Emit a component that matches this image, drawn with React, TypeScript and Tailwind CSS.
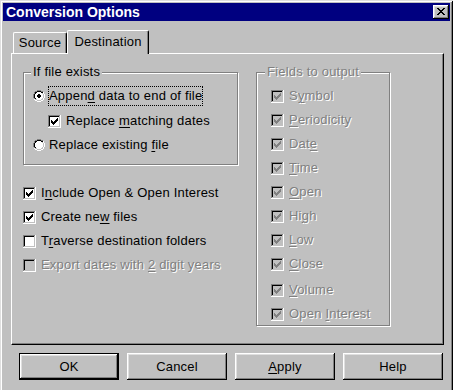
import React from 'react';
import clsx from 'clsx';

const COLORS: Record<string, string> = {
  g: '#808080',
  k: '#000000',
  w: '#ffffff',
  l: '#dfdfdf',
  f: '#ffffff',
  c: '#c0c0c0',
};

function PixelArt({ rows, colors = COLORS, className }: { rows: string[]; colors?: Record<string, string>; className?: string }) {
  const w = rows[0].length;
  const h = rows.length;
  return (
    <svg width={w} height={h} viewBox={`0 0 ${w} ${h}`} shapeRendering="crispEdges" className={clsx('shrink-0 block', className)}>
      {rows.flatMap((row, y) =>
        row.split('').map((ch, x) =>
          ch === '.' ? null : <rect key={`${x}-${y}`} x={x} y={y} width={1} height={1} fill={colors[ch]} />
        )
      )}
    </svg>
  );
}

const CLOSE_X = [
  'kk....kk',
  '.kk..kk.',
  '..kkkk..',
  '...kk...',
  '..kkkk..',
  '.kk..kk.',
  'kk....kk',
];

function radioRows(checked: boolean) {
  const base = [
    '....gggg....',
    '..ggkkkkgg..',
    '.gkkffffkkw.',
    '.gkffffffcw.',
    'gkffffffffcw',
    'gkffffffffcw',
    'gkffffffffcw',
    'gkffffffffcw',
    '.gkffffffcw.',
    '.wccffffccw.',
    '..wwccccww..',
    '....wwww....',
  ];
  if (!checked) return base;
  const dot = ['.kk.', 'kkkk', 'kkkk', '.kk.'];
  return base.map((row, y) => {
    if (y < 4 || y > 7) return row;
    const d = dot[y - 4];
    return row.slice(0, 4) + d.split('').map((ch, i) => (ch === 'k' ? 'k' : row[4 + i])).join('') + row.slice(8);
  });
}

function checkRows(checked: boolean, disabled: boolean) {
  const face = disabled ? 'c' : 'f';
  const rows: string[] = [];
  for (let y = 0; y < 13; y++) {
    let row = '';
    for (let x = 0; x < 13; x++) {
      let ch = face;
      if (x === 12 || y === 12) ch = 'w';
      else if (x === 0 || y === 0) ch = 'g';
      else if (x === 11 || y === 11) ch = 'c';
      else if (x === 1 || y === 1) ch = 'k';
      row += ch;
    }
    rows.push(row);
  }
  if (checked) {
    const tops = [5, 6, 7, 6, 5, 4, 3];
    tops.forEach((top, i) => {
      for (let y = top; y < top + 3; y++) {
        const r = rows[y].split('');
        r[3 + i] = disabled ? 'g' : 'k';
        rows[y] = r.join('');
      }
    });
  }
  return rows;
}

// first '&' marks the underlined access key
function Mnemonic({ text }: { text: string }) {
  const i = text.indexOf('&');
  if (i < 0) return <>{text}</>;
  return (
    <>
      {text.slice(0, i)}
      <span className="underline underline-offset-[2px]">{text[i + 1]}</span>
      {text.slice(i + 2)}
    </>
  );
}

function Label({ text, disabled, focus }: { text: string; disabled?: boolean; focus?: boolean }) {
  return (
    <span
      className={clsx(
        'whitespace-nowrap border py-[1px] leading-[16px]',
        focus ? 'border-dotted border-black' : 'border-transparent',
        disabled && 'text-[#808080] [text-shadow:1px_1px_0_#fff]'
      )}
    >
      <Mnemonic text={text} />
    </span>
  );
}

function CheckRow({ text, checked = false, disabled = false, className }: { text: string; checked?: boolean; disabled?: boolean; className?: string }) {
  return (
    <div className={clsx('flex items-center h-[24px]', className)}>
      <PixelArt rows={checkRows(checked, disabled)} />
      <span className="ml-[4px] flex">
        <Label text={text} disabled={disabled} />
      </span>
    </div>
  );
}

function RadioRow({ text, checked = false, focus = false, className }: { text: string; checked?: boolean; focus?: boolean; className?: string }) {
  return (
    <div className={clsx('flex items-center', className)}>
      <PixelArt rows={radioRows(checked)} />
      <span className="ml-[3px] flex">
        <Label text={text} focus={focus} />
      </span>
    </div>
  );
}

function GroupBox({ title, disabled, className, labelLeft, children }: { title: string; disabled?: boolean; className?: string; labelLeft: string; children: React.ReactNode }) {
  return (
    <div className={clsx('relative border border-[#808080] shadow-[inset_1px_1px_0_#fff,1px_1px_0_#fff]', className)}>
      <span
        className={clsx(
          'absolute -top-[9px] bg-[#c0c0c0] px-[2px] leading-[15px] whitespace-nowrap',
          labelLeft,
          disabled && 'text-[#808080] [text-shadow:1px_1px_0_#fff]'
        )}
      >
        {title}
      </span>
      {children}
    </div>
  );
}

const raised =
  'shadow-[inset_-1px_-1px_0_#000,inset_1px_1px_0_#fff,inset_-2px_-2px_0_#808080,inset_2px_2px_0_#dfdfdf]';

function DialogButton({ text, isDefault }: { text: string; isDefault?: boolean }) {
  if (isDefault) {
    return (
      <div className="w-[100px] h-[27px] border border-black bg-[#c0c0c0]">
        <div className={clsx('w-full h-full flex items-center justify-center', raised)}>
          <Mnemonic text={text} />
        </div>
      </div>
    );
  }
  return (
    <div className={clsx('w-[100px] h-[27px] flex items-center justify-center bg-[#c0c0c0]', raised)}>
      <Mnemonic text={text} />
    </div>
  );
}

const fields = [
  { text: 'S&ymbol' },
  { text: '&Periodicity' },
  { text: 'Dat&e' },
  { text: '&Time' },
  { text: '&Open' },
  { text: 'Hi&gh' },
  { text: '&Low' },
  { text: '&Close' },
  { text: '&Volume', className: 'mt-[2px]' },
  { text: 'Open &Interest', className: 'h-[20px]' },
];

export default function App() {
  return (
    <div className="w-[453px] h-[390px] overflow-hidden bg-[#c0c0c0] font-['Liberation_Sans',Arial,sans-serif] text-[13px] tracking-[0.2px] text-black">
      <div className="h-[400px] p-[3px] shadow-[inset_1px_1px_0_#dfdfdf,inset_-1px_-1px_0_#000,inset_2px_2px_0_#fff,inset_-2px_-2px_0_#808080]">
        {/* title bar */}
        <div className="h-[18px] bg-[#000080] flex items-center justify-between pl-[3px] pr-[1px]">
          <span className="text-white font-bold text-[14px] tracking-normal leading-[18px]">Conversion Options</span>
          <div className={clsx('w-[16px] h-[14px] bg-[#c0c0c0] pl-[4px] pt-[3px]', raised)}>
            <PixelArt rows={CLOSE_X} />
          </div>
        </div>

        <div className="pl-[8px] pr-[6px] pt-[9px]">
          {/* tabs */}
          <div className="flex items-start h-[24px]">
            <div className="ml-[2px] mt-[2px] w-[54px] h-[21px] border-l border-t border-r border-l-white border-t-white border-r-black rounded-t-[2px] shadow-[inset_-1px_0_0_#808080] flex justify-center pt-[2px] leading-[15px]">
              Source
            </div>
            <div className="relative z-10 w-[82px] h-[24px] bg-[#c0c0c0] border-l border-t border-r border-l-white border-t-white border-r-black rounded-t-[2px] shadow-[inset_-1px_0_0_#808080] flex justify-center pt-[3px] leading-[15px]">
              Destination
            </div>
          </div>

          {/* panel */}
          <div className="-mt-[1px] h-[292px] border border-l-white border-t-white border-r-black border-b-black shadow-[inset_-1px_-1px_0_#808080] pl-[11px] pt-[18px] flex gap-[18px]">
            <div className="w-[215px]">
              <GroupBox title="If file exists" labelLeft="left-[7px]" className="w-[215px] h-[93px] pl-[9px] pt-[10px]">
                <RadioRow text="Appen&d data to end of file" checked focus className="h-[25px]" />
                <CheckRow text="Replace &matching dates" checked className="h-[26px] ml-[15px]" />
                <RadioRow text="Replace existing &file" className="h-[21px]" />
              </GroupBox>
              <div className="mt-[16px]">
                <CheckRow text="I&nclude Open & Open Interest" checked />
                <CheckRow text="Create ne&w files" checked />
                <CheckRow text="T&raverse destination folders" />
                <CheckRow text="Export dates with &2 digit years" disabled />
              </div>
            </div>

            <GroupBox title="Fields to output" disabled labelLeft="left-[8px]" className="w-[134px] h-[254px] pl-[14px] pt-[11px]">
              {fields.map((f) => (
                <CheckRow key={f.text} text={f.text} checked disabled className={f.className} />
              ))}
            </GroupBox>
          </div>

          {/* buttons */}
          <div className="mt-[8px] ml-[8px] flex gap-[8px]">
            <DialogButton text="OK" isDefault />
            <DialogButton text="Cancel" />
            <DialogButton text="&Apply" />
            <DialogButton text="Help" />
          </div>
        </div>
      </div>
    </div>
  );
}
